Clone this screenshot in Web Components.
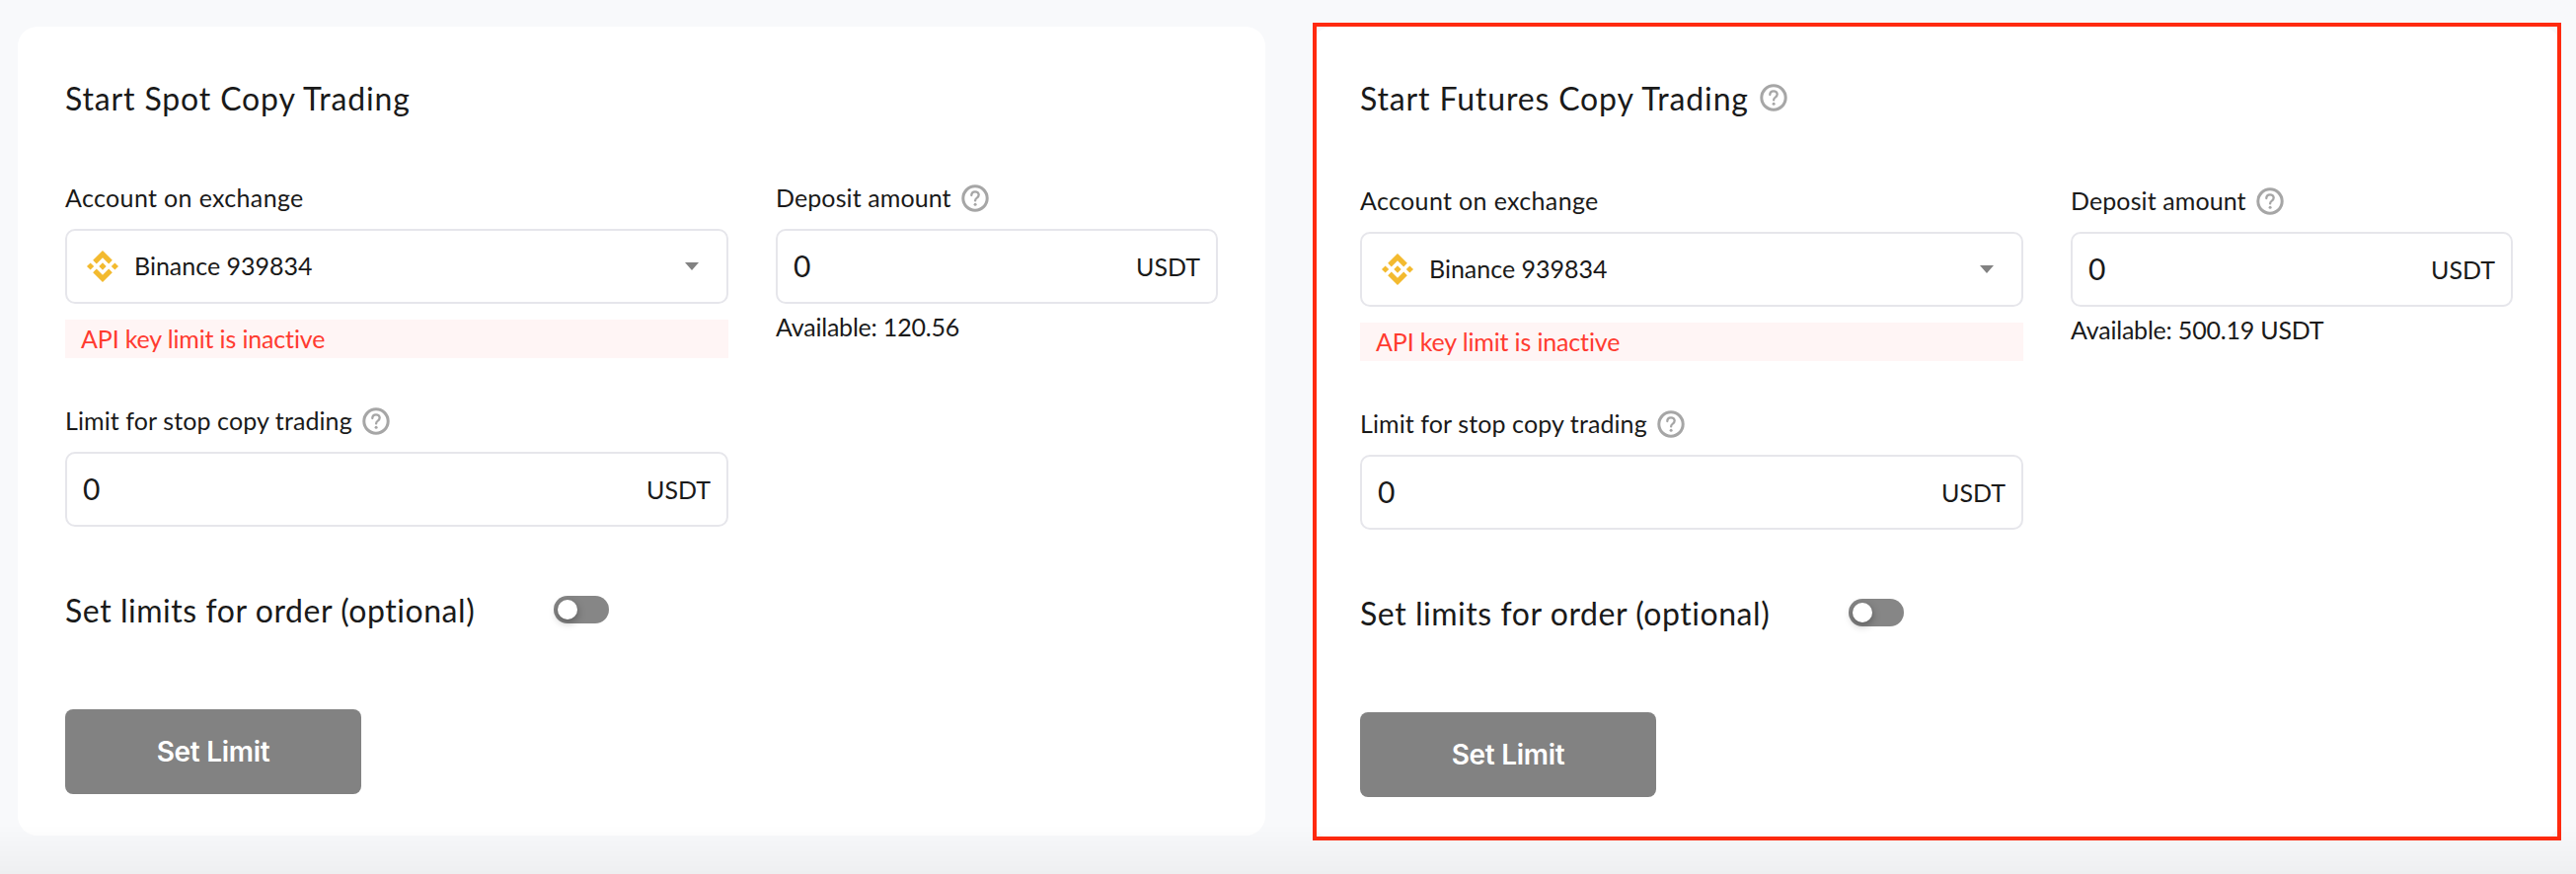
<!DOCTYPE html>
<html>
<head>
<meta charset="utf-8">
<title>Copy Trading</title>
<style>
    html, body { margin: 0; height: 100%; }
    body {
        background: #f8f9fb;
        font-family: Lato, "Liberation Sans", sans-serif;
        color: #1a1a1a;
        overflow: hidden;
    }
    .page {
        display: flex;
        align-items: flex-start;
        gap: 48px;
        padding: 27px 16px 0 18px;
    }
</style>
</head>
<body>
<div class="page">
    <copy-card heading="Start Spot Copy Trading" available="Available: 120.56"></copy-card>
    <copy-card heading="Start Futures Copy Trading" available="Available: 500.19 USDT" hint highlighted></copy-card>
</div>
<bottom-fade></bottom-fade>

<script>
class HelpIcon extends HTMLElement {
    constructor() {
        super();
        this.attachShadow({mode: 'open'}).innerHTML = `
            <style>
                :host { display: inline-flex; width: 28px; height: 28px; flex: none; }
                svg { width: 100%; height: 100%; }
            </style>
            <svg viewBox="0 0 28 28" fill="none" stroke="#a6a6a6">
                <circle cx="14" cy="14" r="12.2" stroke-width="3"/>
                <path d="M10.3 11c0-2.3 1.7-3.7 3.7-3.7s3.7 1.4 3.7 3.3c0 1.6-.9 2.3-1.9 3-1.1.7-1.7 1.4-1.7 2.8" stroke-width="2.3" stroke-linecap="round"/>
                <circle cx="14.1" cy="20.2" r="1.5" fill="#a6a6a6" stroke="none"/>
            </svg>
        `;
    }
}

class BinanceLogo extends HTMLElement {
    constructor() {
        super();
        this.attachShadow({mode: 'open'}).innerHTML = `
            <style>
                :host { display: inline-flex; width: 32px; height: 32px; flex: none; }
                svg { width: 100%; height: 100%; fill: #f3ba2f; }
            </style>
            <svg viewBox="0 0 126.61 126.61">
                <path d="M38.73 53.2 63.3 28.63l24.59 24.59 14.3-14.3L63.3 0 24.43 38.9z"/>
                <path d="m0 63.3 14.3-14.3 14.3 14.3-14.3 14.3z"/>
                <path d="M38.73 73.41 63.3 97.98l24.58-24.57 14.31 14.29-38.89 38.9-38.9-38.88z"/>
                <path d="m97.99 63.31 14.3-14.3 14.3 14.3-14.3 14.3z"/>
                <path d="M77.83 63.3 63.3 48.78 52.58 59.5l-1.24 1.23-2.54 2.54 14.5 14.51 14.53-14.48z"/>
            </svg>
        `;
    }
}

class FieldLabel extends HTMLElement {
    constructor() {
        super();
        this.attachShadow({mode: 'open'}).innerHTML = `
            <style>
                :host {
                    display: flex;
                    align-items: center;
                    gap: 10px;
                    height: 30px;
                    margin-bottom: 16px;
                    font-size: 25px;
                    letter-spacing: .1px;
                }
                .text { margin-bottom: 3px; }
            </style>
            <span class="text"><slot></slot></span>
            <slot name="icon"></slot>
        `;
    }
}

class SelectBox extends HTMLElement {
    constructor() {
        super();
        this.attachShadow({mode: 'open'}).innerHTML = `
            <style>
                :host {
                    display: flex;
                    align-items: center;
                    gap: 16px;
                    box-sizing: border-box;
                    height: 76px;
                    padding: 0 28px 0 20px;
                    border: 2px solid #e6e6eb;
                    border-radius: 10px;
                    background: #fff;
                    font-size: 25px;
                }
                .text { flex: 1; margin-bottom: 3px; }
                .caret {
                    width: 0;
                    height: 0;
                    border-left: 7px solid transparent;
                    border-right: 7px solid transparent;
                    border-top: 8px solid #828282;
                }
            </style>
            <slot name="icon"></slot>
            <span class="text"><slot></slot></span>
            <span class="caret"></span>
        `;
    }
}

class AmountInput extends HTMLElement {
    constructor() {
        super();
        this.attachShadow({mode: 'open'}).innerHTML = `
            <style>
                :host {
                    display: flex;
                    align-items: center;
                    justify-content: space-between;
                    box-sizing: border-box;
                    height: 76px;
                    padding: 0 16px;
                    border: 2px solid #e6e6eb;
                    border-radius: 10px;
                    background: #fff;
                    font-size: 25px;
                }
                .value { font-size: 30px; margin-bottom: 3px; }
            </style>
            <span class="value">${this.getAttribute('value')}</span>
            <span><slot></slot></span>
        `;
    }
}

class ErrorNote extends HTMLElement {
    constructor() {
        super();
        this.attachShadow({mode: 'open'}).innerHTML = `
            <style>
                :host {
                    display: block;
                    margin-top: 16px;
                    padding: 0 16px;
                    height: 39px;
                    line-height: 38px;
                    background: #fff5f5;
                    color: #ff3b30;
                    font-size: 25px;
                    letter-spacing: -.15px;
                }
            </style>
            <slot></slot>
        `;
    }
}

class LimitToggle extends HTMLElement {
    constructor() {
        super();
        this.attachShadow({mode: 'open'}).innerHTML = `
            <style>
                :host { display: flex; align-items: center; height: 40px; font-size: 32px; letter-spacing: .55px; }
                .text { width: 495px; }
                .track {
                    display: flex;
                    align-items: center;
                    box-sizing: border-box;
                    width: 56px;
                    height: 28px;
                    padding: 0 4px;
                    border-radius: 14px;
                    background: #868686;
                }
                .thumb {
                    width: 20px;
                    height: 20px;
                    border-radius: 50%;
                    background: #fff;
                    box-shadow: 0 3px 8px rgba(0, 0, 0, .35);
                }
            </style>
            <span class="text"><slot></slot></span>
            <span class="track"><span class="thumb"></span></span>
        `;
    }
}

class ActionButton extends HTMLElement {
    constructor() {
        super();
        this.attachShadow({mode: 'open'}).innerHTML = `
            <style>
                :host {
                    display: flex;
                    align-items: center;
                    justify-content: center;
                    width: 300px;
                    height: 86px;
                    border-radius: 8px;
                    background: #828282;
                    color: #fff;
                    font-family: Inter, "Liberation Sans", sans-serif;
                    font-size: 28px;
                    font-weight: 600;
                    letter-spacing: -.3px;
                }
            </style>
            <slot></slot>
        `;
    }
}

class BottomFade extends HTMLElement {
    constructor() {
        super();
        this.attachShadow({mode: 'open'}).innerHTML = `
            <style>
                /* soft grey fade lying over the lower edge of the page */
                :host {
                    display: block;
                    position: fixed;
                    left: 0;
                    right: 0;
                    bottom: 0;
                    height: 50px;
                    background: linear-gradient(rgba(0, 0, 0, 0), rgba(0, 0, 0, .02) 48%, rgba(0, 0, 0, .04));
                    pointer-events: none;
                }
            </style>
        `;
    }
}

class CopyCard extends HTMLElement {
    constructor() {
        super();
        const hint = this.hasAttribute('hint') ? '<help-icon class="title-hint"></help-icon>' : '';
        this.attachShadow({mode: 'open'}).innerHTML = `
            <style>${CopyCard.styles}</style>
            <div class="title">${this.getAttribute('heading')}${hint}</div>
            <div class="fields">
                <div class="col">
                    <field-label class="account">Account on exchange</field-label>
                    <select-box><binance-logo slot="icon"></binance-logo>Binance 939834</select-box>
                    <error-note>API key limit is inactive</error-note>
                    <field-label class="limit">Limit for stop copy trading<help-icon slot="icon"></help-icon></field-label>
                    <amount-input value="0">USDT</amount-input>
                </div>
                <div class="col">
                    <field-label>Deposit amount<help-icon slot="icon"></help-icon></field-label>
                    <amount-input value="0">USDT</amount-input>
                    <div class="available">${this.getAttribute('available')}</div>
                </div>
            </div>
            <limit-toggle>Set limits for order (optional)</limit-toggle>
            <action-button>Set Limit</action-button>
        `;
    }

    static get styles() {
        return `
            :host {
                display: block;
                position: relative;
                flex: 1;
                box-sizing: border-box;
                padding: 53px 48px 42px;
                border-radius: 20px;
                background: #fff;
            }

            /* red frame lies over the second card */
            :host([highlighted])::after {
                content: "";
                position: absolute;
                inset: -4px -1px -2px 0;
                border: 4px solid #ff2a0f;
                pointer-events: none;
            }

            .title {
                display: flex;
                align-items: flex-start;
                gap: 11px;
                height: 40px;
                line-height: 40px;
                margin-bottom: 66px;
                font-size: 32px;
                letter-spacing: .85px;
            }

            :host([hint]) .title { margin-bottom: 69px; }

            .title-hint { margin-top: 5px; }

            .fields {
                display: grid;
                grid-template-columns: 672px 1fr;
                gap: 48px;
            }

            .account { letter-spacing: .35px; }

            .limit { margin-top: 49px; }

            .available {
                margin-top: 8px;
                height: 30px;
                line-height: 30px;
                font-size: 25px;
                letter-spacing: -.2px;
            }

            limit-toggle { margin-top: 64px; }

            action-button { margin-top: 81px; }
        `;
    }
}

window.customElements.define('help-icon', HelpIcon);
window.customElements.define('binance-logo', BinanceLogo);
window.customElements.define('field-label', FieldLabel);
window.customElements.define('select-box', SelectBox);
window.customElements.define('amount-input', AmountInput);
window.customElements.define('error-note', ErrorNote);
window.customElements.define('limit-toggle', LimitToggle);
window.customElements.define('action-button', ActionButton);
window.customElements.define('bottom-fade', BottomFade);
window.customElements.define('copy-card', CopyCard);
</script>
</body>
</html>
